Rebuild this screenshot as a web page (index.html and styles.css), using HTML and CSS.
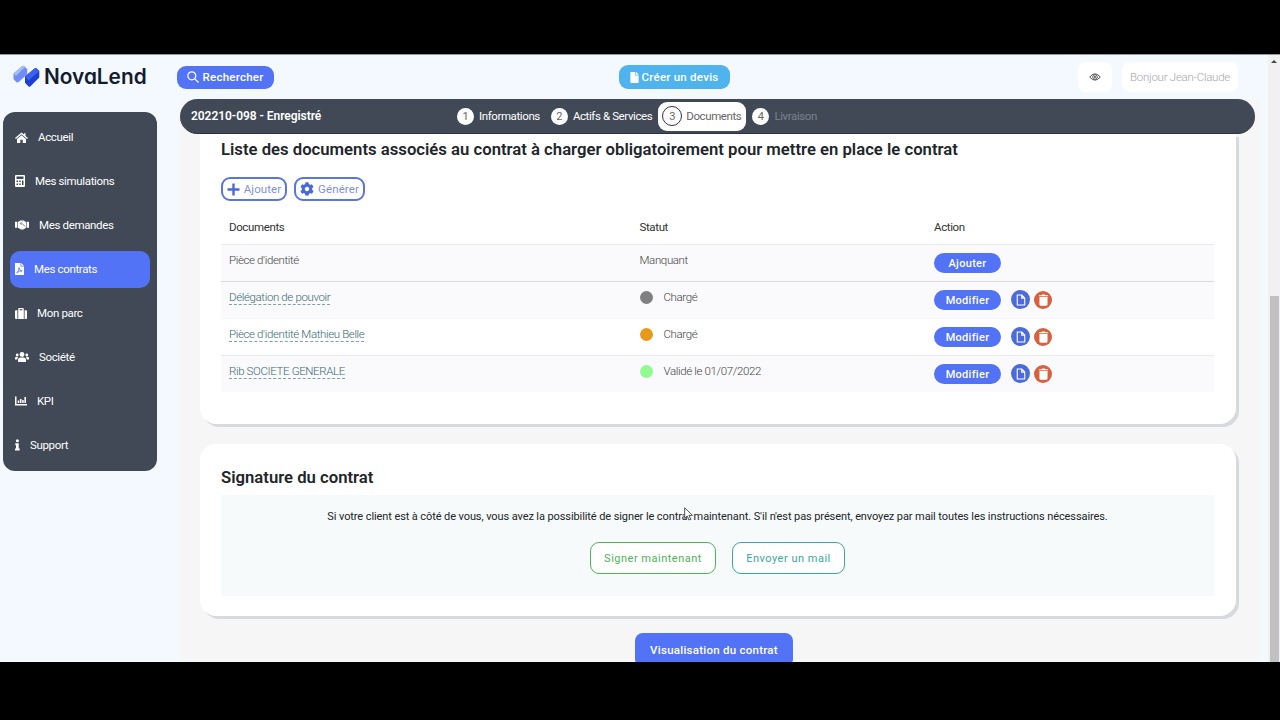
FILE: index.html
```html
<!DOCTYPE html>
<html lang="fr">
<head>
    <meta charset="UTF-8">
    <meta name="viewport" content="width=device-width, initial-scale=1.0">
    <title>NovaLend - Mes contrats</title>
    <link rel="stylesheet" href="styles.css">
</head>
<body>
    <!-- Shared icons -->
    <svg class="sprite">
        <symbol id="file" viewBox="0 0 384 512"><path d="M224 136V0H24C10.700 0 0 10.700 0 24v464c0 13.300 10.700 24 24 24h336c13.300 0 24-10.700 24-24V160H248c-13.200 0-24-10.800-24-24zm160-14.100v6.100H256V0h6.100c6.400 0 12.500 2.500 17 7l97.900 98c4.500 4.500 7 10.600 7 16.900z"/></symbol>
        <symbol id="page" viewBox="0 0 12 14"><path d="M1.500 1h5.500l3.500 3.500v8.500h-9zM6.800 1v3.700h3.700" fill="none" stroke="currentColor" stroke-width="1.300"/></symbol>
        <symbol id="trash" viewBox="0 0 12 13"><path d="M1 1.300h3L4.600.500h2.800l.6.800h3v1.200H1zM1.600 3.100h8.800V11.500q0 1.200-1.200 1.200H2.800q-1.200 0-1.200-1.200z"/></symbol>
    </svg>

    <div class="app">
        <aside class="side">
            <div class="logo">
                <svg width="27" height="23" viewBox="0 0 27 23">
                    <path d="M.5 8.500 9 1.300q1.200-1 2.300 0l2.900 3v4.900L6 16.800q-1.700 1.400-2.800.2L.5 14z" fill="#6f8cf8"/>
                    <path d="M.5 8.500 9 1.300q1.200-1 2.300 0L12 2 3 11z" fill="#a3bdfb"/>
                    <path d="M12 11.500 21.500 3.500q1.200-1 2.200 0L26.300 6v6.500L17.500 21.300q-1.200 1-2.200 0L12 17.800z" fill="#1f3fd0"/>
                    <path d="M12 11.500 21.500 3.500q1.200-1 2.200 0L26.300 6 15.500 15.500z" fill="#3c61ee"/>
                </svg>
                <span>NovaLend</span>
            </div>
            <nav class="menu">
                <a class="item">
                    <svg width="13" height="11" viewBox="0 0 13 11"><path d="M6.500.5 9 2.600V1.200h1.500v2.700L13 6l-.9 1L6.500 2.300.900 7 0 6zM6.500 3.300 11 7v4H7.700V7.800H5.300V11H2V7z"/></svg>
                    <span>Accueil</span>
                </a>
                <a class="item">
                    <svg width="10" height="12" viewBox="0 0 10 12"><path fill-rule="evenodd" d="M1 0h8q1 0 1 1v10q0 1-1 1H1q-1 0-1-1V1q0-1 1-1zM1.500 1.500v2.500h7V1.500zM1.500 5.500V7H3V5.500zm2.700 0V7h1.500V5.500zM1.500 8.500V10H3V8.500zm2.700 0V10h1.500V8.500zM7 5.500V10h1.500V5.500z"/></svg>
                    <span>Mes simulations</span>
                </a>
                <a class="item">
                    <svg width="14" height="10" viewBox="0 0 14 10"><path d="M0 1.700h2v6H0zM12 1.700h2v6h-2zM2.600 1.800h1.200L5 .6h4l1.200 1.200h1.200v5.700l-3 2.100H6L2.600 7.500z"/><path d="M7 1.600 5 3.600q1 1.200 2.300 0L10 6.500" fill="none" stroke="#414956" stroke-width=".7"/></svg>
                    <span>Mes demandes</span>
                </a>
                <a class="item active">
                    <svg width="9" height="12" viewBox="0 0 9 12"><path d="M0 0h5.500v3.500H9V12H0zM6.200 0 9 2.800H6.200z"/><path d="M4 4.500Q4.500 7 1.800 9.800M4 4.500Q4 7.500 7.200 8 4 7.800 1.800 9.800" fill="none" stroke="#5273f5" stroke-width=".8"/></svg>
                    <span>Mes contrats</span>
                </a>
                <a class="item">
                    <svg width="12" height="11" viewBox="0 0 12 11"><path fill-rule="evenodd" d="M3.200 2.200V1Q3.200 0 4.200 0h3.600q1 0 1 1v1.200V11H3.200zM4.500 1.300v.9h3v-.9zM0 3.200q0-1 1-1h1.400V11H1q-1 0-1-1zM9.600 2.200H11q1 0 1 1V10q0 1-1 1H9.600z"/></svg>
                    <span>Mon parc</span>
                </a>
                <a class="item">
                    <svg width="14" height="10" viewBox="0 0 14 10"><circle cx="7" cy="2.500" r="2.400"/><circle cx="2.200" cy="2.900" r="1.400"/><circle cx="11.800" cy="2.900" r="1.400"/><path d="M3 10V8q0-2.600 2.600-2.600h2.800Q11 5.400 11 8v2zM0 7.500V6.200Q0 4.800 1.500 4.800h1.800Q2.300 6 2.300 7.500zM14 7.500V6.200q0-1.400-1.500-1.400h-1.800q1 1.200 1 2.700z"/></svg>
                    <span>Société</span>
                </a>
                <a class="item">
                    <svg width="12" height="10" viewBox="0 0 12 10"><path d="M0 .5h1.500V8H12v1.500H0zM2.700 4.500h1.500V7H2.700zM4.900 3h1.600v4H4.900zM7.200 4h1.500v3H7.200zM9.400 1H11v6H9.400z"/></svg>
                    <span>KPI</span>
                </a>
                <a class="item">
                    <svg width="5" height="12" viewBox="0 0 5 12"><circle cx="2.400" cy="1.700" r="1.500"/><path d="M.3 4.300h3.400v5.200h1v1.900H0V9.500h1V6.200H.3z"/></svg>
                    <span>Support</span>
                </a>
            </nav>
        </aside>

        <main class="main">
            <header class="topbar">
                <button class="btn search">
                    <svg class="line" width="12" height="12" viewBox="0 0 12 12" stroke-width="1.200"><circle cx="4.800" cy="4.800" r="4"/><path d="m7.800 7.800 3.700 3.700"/></svg>
                    <span>Rechercher</span>
                </button>
                <button class="btn quote">
                    <svg width="9" height="11"><use href="#file"/></svg>
                    <span>Créer un devis</span>
                </button>
                <div class="user">
                    <button class="eye">
                        <svg class="line" width="12" height="8" viewBox="0 0 12 8"><path d="M.7 4Q6-2.300 11.300 4 6 10.300.7 4z"/><circle cx="6" cy="4" r="2.300"/><circle cx="6" cy="4" r=".7"/></svg>
                    </button>
                    <div class="hello">Bonjour Jean-Claude</div>
                </div>
            </header>

            <div class="steps">
                <strong class="ref">202210-098 - Enregistré</strong>
                <div class="step"><b>1</b><span>Informations</span></div>
                <div class="step"><b>2</b><span>Actifs &amp; Services</span></div>
                <div class="step current"><b>3</b><span>Documents</span></div>
                <div class="step off"><b>4</b><span>Livraison</span></div>
            </div>

            <div class="content">
                <section class="card documents">
                    <h2>Liste des documents associés au contrat à charger obligatoirement pour mettre en place le contrat</h2>
                    <div class="tools">
                        <button class="tool add">
                            <svg width="13" height="13" viewBox="0 0 13 13"><path d="M5.300.5h2.400v4.800h4.800v2.400H7.700v4.800H5.300V7.700H.5V5.300h4.800z"/></svg>
                            <span>Ajouter</span>
                        </button>
                        <button class="tool gen">
                            <svg width="14" height="14" viewBox="0 0 512 512"><path d="M487.400 315.700l-42.600-24.600c4.300-23.200 4.300-47 0-70.200l42.600-24.600c4.900-2.800 7.100-8.600 5.500-14-11.100-35.600-30-67.800-54.700-94.600-3.800-4.100-10-5.100-14.800-2.300L380.800 110c-17.900-15.400-38.500-27.300-60.800-35.100V25.800c0-5.600-3.900-10.500-9.400-11.700-36.700-8.200-74.300-7.800-109.200 0-5.500 1.200-9.400 6.100-9.400 11.700V75c-22.200 7.900-42.800 19.800-60.800 35.100L88.700 85.500c-4.900-2.800-11-1.900-14.800 2.300-24.700 26.700-43.600 58.900-54.700 94.600-1.700 5.400.6 11.200 5.500 14L67.300 221c-4.300 23.200-4.300 47 0 70.200l-42.600 24.600c-4.900 2.800-7.100 8.600-5.500 14 11.100 35.600 30 67.800 54.700 94.600 3.800 4.100 10 5.100 14.800 2.300l42.600-24.600c17.900 15.400 38.500 27.300 60.800 35.100v49.200c0 5.600 3.900 10.500 9.400 11.700 36.700 8.200 74.300 7.800 109.200 0 5.500-1.200 9.400-6.100 9.400-11.700v-49.200c22.200-7.900 42.800-19.800 60.800-35.100l42.600 24.600c4.900 2.800 11 1.900 14.800-2.300 24.700-26.700 43.600-58.900 54.700-94.600 1.500-5.500-.7-11.300-5.600-14.100zM256 336c-44.100 0-80-35.900-80-80s35.900-80 80-80 80 35.900 80 80-35.900 80-80 80z"/></svg>
                            <span>Générer</span>
                        </button>
                    </div>
                    <table>
                        <thead>
                            <tr>
                                <th class="col-doc">Documents</th>
                                <th class="col-status">Statut</th>
                                <th>Action</th>
                            </tr>
                        </thead>
                        <tbody>
                            <tr class="shade">
                                <td>Pièce d'identité</td>
                                <td>Manquant</td>
                                <td><div class="actions"><button class="small">Ajouter</button></div></td>
                            </tr>
                            <tr class="shade strong">
                                <td><a>Délégation de pouvoir</a></td>
                                <td><div class="status"><i class="dot grey"></i>Chargé</div></td>
                                <td><div class="actions">
                                    <button class="small">Modifier</button>
                                    <button class="round view"><svg width="10" height="12"><use href="#page"/></svg></button>
                                    <button class="round del"><svg width="11" height="12"><use href="#trash"/></svg></button>
                                </div></td>
                            </tr>
                            <tr class="plain">
                                <td><a>Pièce d'identité Mathieu Belle</a></td>
                                <td><div class="status"><i class="dot orange"></i>Chargé</div></td>
                                <td><div class="actions">
                                    <button class="small">Modifier</button>
                                    <button class="round view"><svg width="10" height="12"><use href="#page"/></svg></button>
                                    <button class="round del"><svg width="11" height="12"><use href="#trash"/></svg></button>
                                </div></td>
                            </tr>
                            <tr class="shade">
                                <td><a>Rib SOCIETE GENERALE</a></td>
                                <td><div class="status"><i class="dot green"></i>Validé le 01/07/2022</div></td>
                                <td><div class="actions">
                                    <button class="small">Modifier</button>
                                    <button class="round view"><svg width="10" height="12"><use href="#page"/></svg></button>
                                    <button class="round del"><svg width="11" height="12"><use href="#trash"/></svg></button>
                                </div></td>
                            </tr>
                        </tbody>
                    </table>
                </section>

                <section class="card signature">
                    <h2>Signature du contrat</h2>
                    <div class="sign-box">
                        <p>Si votre client est à côté de vous, vous avez la possibilité de signer le contrat maintenant. S'il n'est pas présent, envoyez par mail toutes les instructions nécessaires.</p>
                        <div class="sign-actions">
                            <button class="outline sign">Signer maintenant</button>
                            <button class="outline mail">Envoyer un mail</button>
                        </div>
                    </div>
                </section>

                <button class="preview">Visualisation du contrat</button>
            </div>
        </main>

        <div class="scrollbar">
            <span class="arrow"></span>
            <span class="thumb"></span>
        </div>

        <svg class="cursor" width="10" height="15" viewBox="0 0 10 15"><path d="M.7.8v10.500l2.500-2.300 1.700 4 1.800-.8-1.700-3.800h3.500z" fill="#fff" stroke="#444" stroke-width=".9"/></svg>
    </div>
</body>
</html>
```
FILE: styles.css
```css
* {
    box-sizing: border-box;
}
body {
    margin: 0;
    padding: 54px 0 58px;
    height: 720px;
    background: #000;
    font-family: Roboto, sans-serif;
    font-size: 11px;
    color: #212529;
    overflow: hidden;
}
button {
    font-family: inherit;
    padding: 0;
    border: none;
    cursor: pointer;
}
svg {
    fill: currentColor;
    flex: none;
}
svg.line {
    fill: none;
    stroke: currentColor;
}
span, td, th {
    white-space: nowrap;
}
.sprite {
    display: none;
}
.app {
    position: relative;
    display: flex;
    height: 608px;
    background: #f4f9ff;
    border-top: 1px solid #999;
    overflow: hidden;
}

/* Sidebar */
.side {
    width: 180px;
    padding: 9px 0 0 3px;
}
.logo {
    display: flex;
    align-items: center;
    gap: 4px;
    height: 25px;
    padding-left: 10px;
    color: #151b2e;
    font-family: Inter, sans-serif;
    font-size: 20.800px;
    font-weight: 600;
    line-height: 23px;
    font-feature-settings: "cv11";
}
.logo span {
    padding-bottom: 1px;
}
.menu {
    width: 154px;
    height: 359px;
    margin-top: 22.500px;
    padding: 7px;
    background: #414956;
    border-radius: 12px;
}
.item {
    display: flex;
    align-items: center;
    gap: 10px;
    height: 37px;
    margin-bottom: 7px;
    padding-left: 5px;
    color: #fff;
    font-size: 11.500px;
    letter-spacing: -.35px;
    border-radius: 10px;
}
.item.active {
    background: #5273f5;
}

/* Top bar */
.main {
    width: 1080px;
    background: #f6f6f6;
}
.topbar {
    display: grid;
    grid-template-columns: 1fr auto 1fr;
    align-items: center;
    height: 44px;
    margin-left: -3px;
    padding-right: 22px;
    background: #f4f9ff;
}
.btn {
    display: flex;
    align-items: center;
    justify-content: center;
    gap: 3px;
    height: 23px;
    color: #fff;
    font-size: 11.500px;
    font-weight: 500;
    letter-spacing: .25px;
    border-radius: 9px;
}
.search {
    width: 97px;
    background: #5273f5;
}
.quote {
    width: 111px;
    height: 24px;
    margin-right: 67px;
    background: #4fb3ee;
}
.user {
    display: flex;
    justify-content: flex-end;
    gap: 10px;
}
.eye, .hello {
    display: flex;
    align-items: center;
    justify-content: center;
    height: 30px;
    background: #fff;
    border-radius: 8px;
}
.eye {
    width: 34px;
    color: #555;
}
.hello {
    width: 116px;
    color: #a8a8a8;
    font-size: 11.500px;
    font-weight: 300;
    letter-spacing: -.25px;
    white-space: nowrap;
}

/* Steps */
.steps {
    position: relative;
    display: flex;
    align-items: center;
    width: 1075px;
    height: 35px;
    padding-left: 11px;
    background: #414956;
    border-bottom: 1px solid #2c3440;
    border-radius: 18px;
    color: #fff;
    z-index: 1;
}
.ref {
    width: 261px;
    font-size: 12px;
    font-weight: 600;
    letter-spacing: -.05px;
}
.step {
    display: flex;
    align-items: center;
    gap: 5px;
    height: 29px;
    padding: 0 6px 0 5px;
    font-size: 11.500px;
    letter-spacing: -.4px;
}
.step b {
    display: flex;
    align-items: center;
    justify-content: center;
    width: 17px;
    height: 17px;
    background: #fff;
    border-radius: 50%;
    color: #666;
    font-size: 11px;
    font-weight: 400;
    letter-spacing: 0;
}
.current {
    gap: 4px;
    padding: 0 5px 0 4px;
    background: #fff;
    border-radius: 9px;
    color: #666;
}
.current b {
    width: 20px;
    height: 20px;
    border: 1.500px solid #2c3440;
}
.off {
    padding-left: 6px;
}
.off span {
    color: #7b828d;
}

/* Cards */
.content {
    padding-left: 20px;
}
.card {
    width: 1036px;
    padding: 0 22px 0 21px;
    background: #fff;
    border-radius: 16px;
    box-shadow: 3px 3px 0 #d6dade;
}
.documents {
    height: 290px;
    padding-top: 6px;
    border-radius: 0 0 16px 16px;
}
h2 {
    margin: 0;
    font-size: 16.700px;
    font-weight: 600;
    line-height: 20px;
    white-space: nowrap;
}
.tools {
    display: flex;
    gap: 7px;
    margin-top: 17px;
}
.tool {
    display: flex;
    align-items: center;
    justify-content: center;
    gap: 4px;
    height: 24px;
    background: #fff;
    border: 2px solid #5a75dc;
    border-radius: 9px;
    color: #4b68d8;
    font-size: 11.500px;
}
.tool span {
    color: #7f92d8;
    letter-spacing: .1px;
}
.add {
    width: 66px;
}
.gen {
    width: 71px;
}
table {
    width: 993px;
    margin-top: 10px;
    border-collapse: collapse;
    table-layout: fixed;
}
th {
    height: 33px;
    padding: 0 8px;
    color: #333;
    font-size: 11.500px;
    font-weight: 400;
    letter-spacing: -.37px;
    text-align: left;
}
.col-doc {
    width: 410.500px;
}
.col-status {
    width: 294.500px;
}
td {
    height: 37px;
    padding: 0 8px 5px;
    border-top: 1px solid #e9eaec;
    color: #444;
    font-size: 11.500px;
    font-weight: 300;
    letter-spacing: -.37px;
}
td:last-child {
    padding-bottom: 0;
}
.shade {
    background: #fafafc;
}
.strong td {
    border-top-color: #d9dadc;
}
.plain td {
    border-top-color: #f6f6f8;
}
td a {
    color: #386a72;
    border-bottom: 1px dashed #7fa0a8;
}
.status {
    display: flex;
    align-items: center;
    gap: 11px;
}
.dot {
    width: 13px;
    height: 13px;
    border-radius: 50%;
}
.grey {
    background: #808080;
}
.orange {
    background: #e8981c;
}
.green {
    background: #90fb90;
}
.actions {
    display: flex;
    align-items: center;
    height: 20px;
}
.small {
    width: 67px;
    height: 20px;
    padding-top: 1px;
    background: #5273f5;
    border-radius: 10px;
    color: #fff;
    font-size: 11px;
    font-weight: 500;
    letter-spacing: .3px;
}
.round {
    display: flex;
    align-items: center;
    justify-content: center;
    width: 18px;
    height: 18px;
    border-radius: 50%;
    color: #fff;
}
.view {
    width: 19px;
    height: 19px;
    margin: 0 4px 0 10px;
    background: #4b6bdc;
}
.del {
    background: #d9603f;
}

/* Signature */
.signature {
    height: 172px;
    margin-top: 20px;
    padding-top: 24px;
}
.sign-box {
    height: 101px;
    margin-top: 7px;
    padding-top: 14px;
    background: #f6fafb;
    text-align: center;
}
.sign-box p {
    margin: 0;
    font-size: 11px;
    letter-spacing: -.095px;
    line-height: 16px;
    white-space: nowrap;
}
.sign-actions {
    display: flex;
    justify-content: center;
    gap: 16px;
    margin-top: 17px;
}
.outline {
    height: 32px;
    background: #fff;
    border: 1px solid;
    border-radius: 9px;
    font-size: 11px;
    letter-spacing: .5px;
}
.sign {
    width: 126px;
    color: #4fb35a;
}
.mail {
    width: 113px;
    color: #3aa99f;
}
.preview {
    display: block;
    width: 158px;
    height: 34px;
    margin: 17px 0 0 435px;
    background: #5273f5;
    border-radius: 8px;
    color: #fff;
    font-size: 11.500px;
    font-weight: 500;
    letter-spacing: .25px;
}

/* Scrollbar */
.scrollbar {
    display: flex;
    flex-direction: column;
    align-items: center;
    justify-content: space-between;
    width: 12px;
    margin-left: 8px;
    padding-top: 5px;
    background: #f1f1f1;
}
.arrow {
    border: 3px solid transparent;
    border-top: none;
    border-bottom: 3px solid #444;
}
.thumb {
    width: 9px;
    height: 366px;
    background: #c1c1c1;
}
.cursor {
    position: absolute;
    left: 684px;
    top: 452px;
}
```
